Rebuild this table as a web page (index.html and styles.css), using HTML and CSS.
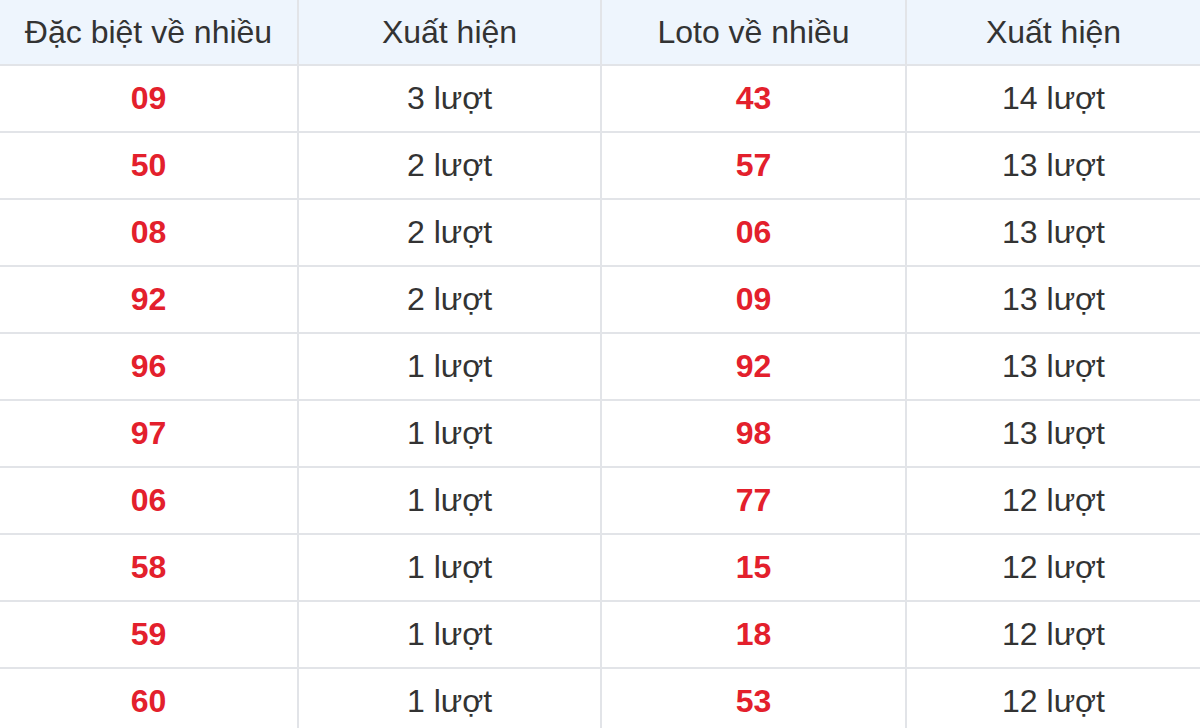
FILE: index.html
```html
<!DOCTYPE html>
<html lang="vi">
<head>
<meta charset="utf-8">
<link rel="stylesheet" href="styles.css">
</head>
<body>
<table class="stats">
  <colgroup>
    <col class="c1"><col class="c2"><col class="c3"><col class="c4">
  </colgroup>
  <thead>
    <tr><th>Đặc biệt về nhiều</th><th>Xuất hiện</th><th>Loto về nhiều</th><th>Xuất hiện</th></tr>
  </thead>
  <tbody>
    <tr><td class="num">09</td><td>3 lượt</td><td class="num">43</td><td>14 lượt</td></tr>
    <tr><td class="num">50</td><td>2 lượt</td><td class="num">57</td><td>13 lượt</td></tr>
    <tr><td class="num">08</td><td>2 lượt</td><td class="num">06</td><td>13 lượt</td></tr>
    <tr><td class="num">92</td><td>2 lượt</td><td class="num">09</td><td>13 lượt</td></tr>
    <tr><td class="num">96</td><td>1 lượt</td><td class="num">92</td><td>13 lượt</td></tr>
    <tr><td class="num">97</td><td>1 lượt</td><td class="num">98</td><td>13 lượt</td></tr>
    <tr><td class="num">06</td><td>1 lượt</td><td class="num">77</td><td>12 lượt</td></tr>
    <tr><td class="num">58</td><td>1 lượt</td><td class="num">15</td><td>12 lượt</td></tr>
    <tr><td class="num">59</td><td>1 lượt</td><td class="num">18</td><td>12 lượt</td></tr>
    <tr><td class="num">60</td><td>1 lượt</td><td class="num">53</td><td>12 lượt</td></tr>
  </tbody>
</table>
</body>
</html>
```
FILE: styles.css
```css
html, body {
  margin: 0;
  padding: 0;
  background: #ffffff;
}
body {
  font-family: "Liberation Sans", Arial, sans-serif;
  color: #333333;
  overflow: hidden;
}
.stats {
  width: 1200px;
  table-layout: fixed;
  border-collapse: separate;
  border-spacing: 0;
  font-size: 32px;
}
.c1 { width: 297px; }
.c2 { width: 303px; }
.c3 { width: 305px; }
.c4 { width: 295px; }
.stats th,
.stats td {
  padding: 0;
  text-align: center;
  vertical-align: middle;
  border-bottom: 2px solid #e2e4e8;
  box-sizing: border-box;
}
.stats th + th,
.stats td + td {
  border-left: 2px solid #e2e4e8;
}
.stats th {
  height: 66px;
  background: #eef5fd;
  font-weight: normal;
  color: #333333;
}
.stats td {
  height: 67px;
}
.stats td.num {
  color: #e3202c;
  font-weight: bold;
}
```
